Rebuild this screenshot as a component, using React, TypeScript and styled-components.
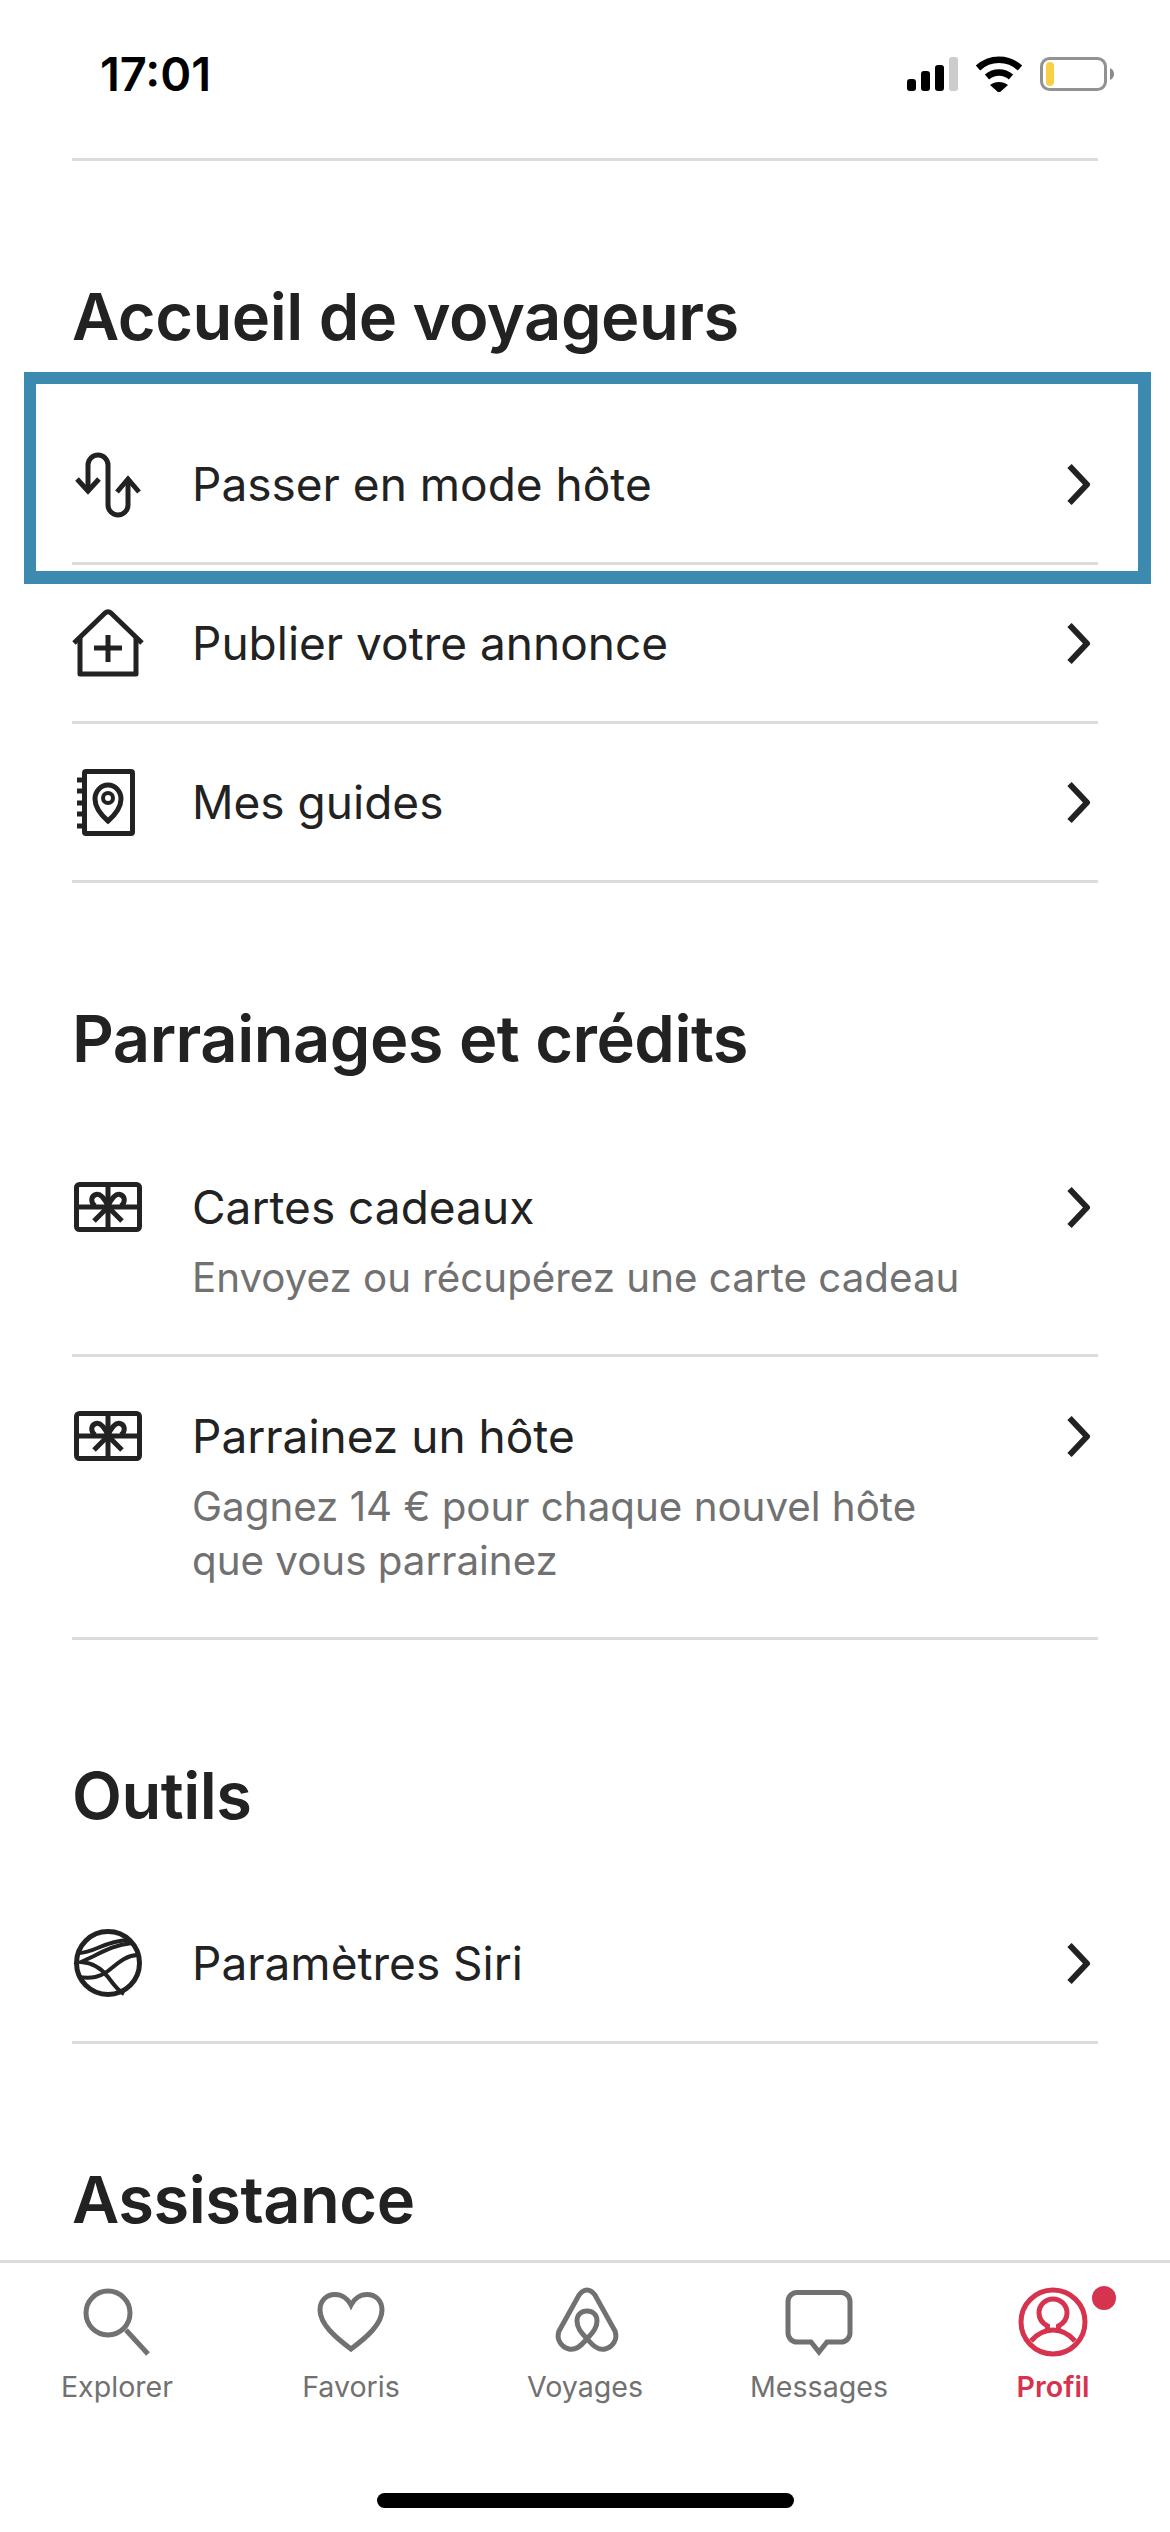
import React from 'react'
import styled, { createGlobalStyle } from 'styled-components'

const GlobalStyle = createGlobalStyle`
  html, body {
    margin: 0;
    padding: 0;
    background: #fff;
  }
  * {
    box-sizing: border-box;
  }
`

const Screen = styled.div`
  width: 1170px;
  height: 2532px;
  display: flex;
  flex-direction: column;
  overflow: hidden;
  background: #fff;
  color: #222;
  font-family: 'Inter', 'Liberation Sans', sans-serif;
`

const StatusBar = styled.div`
  height: 158px;
  flex: none;
  display: flex;
  justify-content: space-between;
  align-items: flex-start;
  padding: 49px 55px 0 100px;
`

const Clock = styled.div`
  font-size: 47px;
  line-height: 50px;
  font-weight: 600;
  color: #000;
`

const StatusIcons = styled.div`
  display: flex;
  align-items: center;
  gap: 17px;
  padding-top: 7px;
`

const Scroller = styled.div`
  flex: 1;
  min-height: 0;
  overflow: hidden;
`

const TopRule = styled.div`
  height: 3px;
  margin: 0 72px;
  background: #dcdcdc;
`

const Section = styled.section`
  padding: 116px 72px 0;
`

const SectionTitle = styled.h2`
  margin: 0 0 49px;
  font-size: 65px;
  line-height: 80px;
  font-weight: 600;
  letter-spacing: -0.5px;
  color: #222;
`

const Row = styled.div<{ $tall?: boolean }>`
  position: relative;
  display: flex;
  align-items: ${(p) => (p.$tall ? 'flex-start' : 'center')};
  min-height: 159px;
  padding: ${(p) => (p.$tall ? '49px 0 49px' : '0')};
  border-bottom: 3px solid #dcdcdc;
`

const IconSlot = styled.div<{ $tall?: boolean }>`
  flex: none;
  width: 72px;
  height: 72px;
  margin: ${(p) => (p.$tall ? '-6px 48px 0 0' : '0 48px 0 0')};
  svg {
    display: block;
  }
`

const RowText = styled.div`
  flex: 1;
  min-width: 0;
`

const RowTitle = styled.div`
  font-size: 46px;
  line-height: 60px;
  font-weight: 400;
  color: #222;
`

const RowSub = styled.div`
  margin-top: 14px;
  max-width: 800px;
  font-size: 40.3px;
  line-height: 54px;
  font-weight: 400;
  color: #717171;
`

const Chevron = styled.svg<{ $tall?: boolean }>`
  flex: none;
  width: 32px;
  height: 44px;
  margin-top: ${(p) => (p.$tall ? '8px' : '0')};
`

const Highlight = styled.div`
  position: absolute;
  top: -34px;
  left: -48px;
  right: -53px;
  bottom: -22px;
  border-style: solid;
  border-color: #3d8ab0;
  border-width: 12px 13px 13px 12px;
  pointer-events: none;
`

const TabBar = styled.nav`
  flex: none;
  height: 272px;
  border-top: 3px solid #dcdcdc;
  background: #fff;
  padding-top: 23px;
`

const Tabs = styled.div`
  display: grid;
  grid-template-columns: repeat(5, 234px);
`

const Tab = styled.div<{ $active?: boolean }>`
  position: relative;
  display: flex;
  flex-direction: column;
  align-items: center;
  gap: 9px;
  color: ${(p) => (p.$active ? '#d6334f' : '#717171')};
  svg {
    display: block;
  }
`

const TabLabel = styled.div<{ $active?: boolean }>`
  font-size: 28.6px;
  line-height: 40px;
  font-weight: ${(p) => (p.$active ? 600 : 400)};
`

const Badge = styled.span`
  position: absolute;
  top: 0;
  left: 156px;
  width: 24px;
  height: 24px;
  border-radius: 50%;
  background: #d6334f;
`

const HomeIndicator = styled.div`
  width: 417px;
  height: 15px;
  margin: 86px auto 0;
  border-radius: 8px;
  background: #000;
`

const Line = (props: React.SVGProps<SVGSVGElement>) => (
  <svg
    width="72"
    height="72"
    viewBox="0 0 72 72"
    fill="none"
    stroke="currentColor"
    strokeWidth="5"
    {...props}
  />
)

const SwitchIcon = () => (
  <Line>
    <path d="M16 44V17A10 10 0 0 1 36 17V57A10 10 0 0 0 56 57V31" />
    <path d="M5 31L16 43L27 31" />
    <path d="M45 44L56 31L67 44" />
  </Line>
)

const HouseIcon = () => (
  <Line>
    <path d="M2 36L33 6Q36 3.5 39 6L70 36" />
    <path d="M8 30V67H64V30" strokeLinejoin="round" />
    <path d="M22 41H50M36 28V55" />
  </Line>
)

const GuideIcon = () => (
  <Line>
    <rect x="12.5" y="5.5" width="48" height="62" rx="1.5" />
    <path d="M5 14H12M5 25H12M5 37H12M5 48H12M5 60H12" />
    <path d="M36 55C28 48 23 41 23 33A13 14 0 1 1 49 33C49 41 44 48 36 55Z" />
    <circle cx="36" cy="32" r="5" strokeWidth="4" />
  </Line>
)

const GiftIcon = () => (
  <Line>
    <rect x="4.5" y="13.5" width="63" height="45" rx="3" />
    <path d="M36 13V58M4 36H68" />
    <path d="M36 36C33 27 28 22.5 24 23.5C19 25 18 31 23 35" />
    <path d="M36 36C39 27 44 22.5 48 23.5C53 25 54 31 49 35" />
    <path d="M36 36L22 50M36 36L50 50" />
  </Line>
)

const SiriIcon = () => (
  <Line>
    <circle cx="36" cy="36" r="31.5" />
    <path d="M7 26C22 26 32 14 56 13" strokeWidth="4" />
    <path d="M60 16C42 18 32 24 22 29L9 35C22 36 30 42 36 50C42 58 46 64 52 67" strokeWidth="4" />
    <path d="M6 50C20 52 28 50 36 44C46 36 54 28 66 28" strokeWidth="4" />
  </Line>
)

const SearchIcon = () => (
  <Line>
    <circle cx="27" cy="27" r="22" />
    <path d="M45 44L67 68" />
  </Line>
)

const HeartIcon = () => (
  <Line strokeLinejoin="miter">
    <path d="M36 19C33 13 27 8.5 20 8.5C11 8.5 5 15 5 24C5 38 20 51 36 63C52 51 67 38 67 24C67 15 61 8.5 52 8.5C45 8.5 39 13 36 19Z" />
  </Line>
)

const BelloIcon = () => (
  <Line>
    <path
      transform="translate(2 0)"
      d="M36 25C30 25 26 29 26 35C26 44 33 49 38 55C44 62 50 64 54 63C62 61 67 53 64 45L44 9C41 5 39 4 36 4C33 4 31 5 28 9L8 45C5 53 10 61 18 63C22 64 28 62 34 55C39 49 46 44 46 35C46 29 42 25 36 25Z"
    />
  </Line>
)

const MessageIcon = () => (
  <Line>
    <path d="M14 6.5H58A9 9 0 0 1 67 15.5V47A9 9 0 0 1 58 56H44L36 66L28 56H14A9 9 0 0 1 5 47V15.5A9 9 0 0 1 14 6.5Z" />
  </Line>
)

const ProfileIcon = () => (
  <Line>
    <circle cx="36" cy="36" r="32" />
    <path d="M30.5 44V40C25 37 22 32 22 27A14 14 0 0 1 50 27C50 32 47 37 41.5 40V44" />
    <path d="M14 55C20 48 27 44 36 44C45 44 52 48 58 55" />
  </Line>
)

const SignalIcon = () => (
  <svg width="51" height="34" viewBox="0 0 51 34">
    <rect x="0" y="22" width="9" height="12" rx="3" fill="#000" />
    <rect x="14" y="14" width="9" height="20" rx="3" fill="#000" />
    <rect x="28" y="8" width="9" height="26" rx="3" fill="#000" />
    <rect x="42" y="0" width="9" height="34" rx="3" fill="#ccc" />
  </svg>
)

const WifiIcon = () => (
  <svg width="48" height="36" viewBox="0 0 48 36">
    <path d="M3 12C15 1 33 1 45 12" fill="none" stroke="#000" strokeWidth="6.5" />
    <path d="M12 21C19 15 29 15 36 21" fill="none" stroke="#000" strokeWidth="6.5" />
    <path d="M15 29C20 25 28 25 33 29L24 37Z" fill="#000" />
  </svg>
)

const BatteryIcon = () => (
  <svg width="75" height="34" viewBox="0 0 75 34">
    <rect x="1.5" y="1.5" width="64" height="31" rx="8" fill="none" stroke="#929292" strokeWidth="3" />
    <rect x="6" y="5" width="8" height="24" rx="4" fill="#f9cf46" />
    <path d="M70 11Q74 13 74 17Q74 21 70 23Z" fill="#8a8a8a" />
  </svg>
)

const ChevronIcon = ({ tall }: { tall?: boolean }) => (
  <Chevron $tall={tall} viewBox="0 0 32 44" fill="none" stroke="#222" strokeWidth="6" strokeLinejoin="round">
    <path d="M3.5 4L21 22.5L3.5 41" />
  </Chevron>
)

type ItemProps = {
  icon: React.ReactNode
  title: string
  sub?: string
  highlighted?: boolean
}

const Item = ({ icon, title, sub, highlighted }: ItemProps) => (
  <Row $tall={!!sub}>
    <IconSlot $tall={!!sub}>{icon}</IconSlot>
    <RowText>
      <RowTitle>{title}</RowTitle>
      {sub && <RowSub>{sub}</RowSub>}
    </RowText>
    <ChevronIcon tall={!!sub} />
    {highlighted && <Highlight />}
  </Row>
)

const tabs = [
  { label: 'Explorer', icon: <SearchIcon /> },
  { label: 'Favoris', icon: <HeartIcon /> },
  { label: 'Voyages', icon: <BelloIcon /> },
  { label: 'Messages', icon: <MessageIcon /> },
  { label: 'Profil', icon: <ProfileIcon />, active: true },
]

const App = () => (
  <Screen>
    <GlobalStyle />
    <StatusBar>
      <Clock>17:01</Clock>
      <StatusIcons>
        <SignalIcon />
        <WifiIcon />
        <BatteryIcon />
      </StatusIcons>
    </StatusBar>
    <Scroller>
      <TopRule />
      <Section>
        <SectionTitle>Accueil de voyageurs</SectionTitle>
        <Item icon={<SwitchIcon />} title="Passer en mode hôte" highlighted />
        <Item icon={<HouseIcon />} title="Publier votre annonce" />
        <Item icon={<GuideIcon />} title="Mes guides" />
      </Section>
      <Section>
        <SectionTitle>Parrainages et crédits</SectionTitle>
        <Item icon={<GiftIcon />} title="Cartes cadeaux" sub="Envoyez ou récupérez une carte cadeau" />
        <Item
          icon={<GiftIcon />}
          title="Parrainez un hôte"
          sub="Gagnez 14 € pour chaque nouvel hôte que vous parrainez"
        />
      </Section>
      <Section>
        <SectionTitle>Outils</SectionTitle>
        <Item icon={<SiriIcon />} title="Paramètres Siri" />
      </Section>
      <Section>
        <SectionTitle>Assistance</SectionTitle>
      </Section>
    </Scroller>
    <TabBar>
      <Tabs>
        {tabs.map((t) => (
          <Tab key={t.label} $active={t.active}>
            {t.icon}
            <TabLabel $active={t.active}>{t.label}</TabLabel>
            {t.active && <Badge />}
          </Tab>
        ))}
      </Tabs>
      <HomeIndicator />
    </TabBar>
  </Screen>
)

export default App
